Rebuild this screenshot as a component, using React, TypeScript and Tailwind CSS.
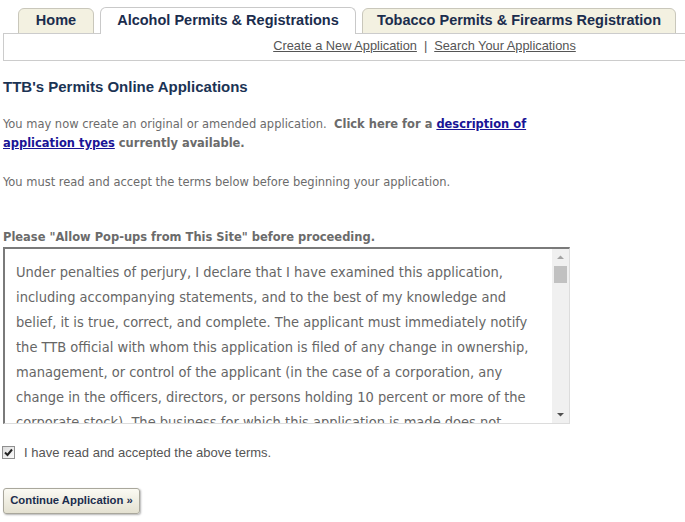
import React from "react";

const terms = [
    "Under penalties of perjury, I declare that I have examined this application,",
    "including accompanying statements, and to the best of my knowledge and",
    "belief, it is true, correct, and complete. The applicant must immediately notify",
    "the TTB official with whom this application is filed of any change in ownership,",
    "management, or control of the applicant (in the case of a corporation, any",
    "change in the officers, directors, or persons holding 10 percent or more of the",
    "corporate stock). The business for which this application is made does not",
];

const tahoma = "font-['DejaVu_Sans_Condensed','DejaVu_Sans',sans-serif] [font-stretch:condensed]";

export default function App() {
    return (
        <div className="w-[685px] h-[522px] bg-white overflow-hidden font-['Liberation_Sans',Arial,sans-serif]">
            {/* Tabs */}
            <div className="flex items-end h-[34px] pl-[18px] gap-[6px] text-[14.5px] font-bold text-[#1b2d4d]">
                <div className="h-[26px] w-[76px] flex items-center justify-center bg-[#f3f1e1] border border-[#c9c7bb] rounded-t-[6px]">Home</div>
                <div className="relative z-10 h-[27px] w-[256px] flex items-center justify-center bg-white border border-b-0 border-[#c9c9c9] rounded-t-[6px]">
                    Alcohol Permits &amp; Registrations
                </div>
                <div className="h-[26px] w-[314px] flex items-center justify-center bg-[#f3f1e1] border border-[#c9c7bb] rounded-t-[6px]">
                    Tobacco Permits &amp; Firearms Registration
                </div>
            </div>

            {/* Sub navigation */}
            <div className="relative -mt-px ml-[3px] h-[28px] bg-white border border-r-0 border-[#cccccc] flex items-center justify-center pl-[160px] pb-[3px] text-[12.8px] text-[#555]">
                <a className="underline">Create a New Application</a>
                <span className="mx-[7px]">|</span>
                <a className="underline">Search Your Applications</a>
            </div>

            <div className="pl-[3px]">
                <h1 className="mt-[17px] text-[15px] leading-[18px] font-bold text-[#1b3354]">TTB's Permits Online Applications</h1>

                <p className={`mt-[18px] w-[536px] text-[12.75px] leading-[19px] text-[#6b6b6b] ${tahoma}`}>
                    You may now create an original or amended application.&nbsp; <b>Click here for a </b>
                    <a className="font-bold text-[#1a1496] underline">description of application types</a>
                    <b> currently available.</b>
                </p>

                <p className={`mt-[20px] text-[12.75px] leading-[19px] text-[#6b6b6b] ${tahoma}`}>
                    You must read and accept the terms below before beginning your application.
                </p>

                <p className={`mt-[37px] text-[12.75px] leading-[18px] font-bold text-[#6b6b6b] ${tahoma}`}>
                    Please "Allow Pop-ups from This Site" before proceeding.
                </p>

                {/* Terms box */}
                <div className="mt-px w-[567px] h-[177px] flex border-t-2 border-l-2 border-t-[#7a7a7a] border-l-[#7a7a7a] border-r border-b border-r-[#dcdcdc] border-b-[#dcdcdc]">
                    <div className={`flex-1 overflow-hidden pt-[11px] pl-[11px] text-[14.5px] leading-[25px] text-[#666] ${tahoma}`}>
                        {terms.map((t, i) => (
                            <div key={i} className="whitespace-nowrap">{t}</div>
                        ))}
                    </div>
                    <div className="w-[17px] bg-[#f0f0f0] flex flex-col items-center">
                        <svg width="17" height="17" viewBox="0 0 17 17"><path d="M5 10 L8.5 6.5 L12 10 Z" fill="#a3a3a3" /></svg>
                        <div className="w-[13px] h-[17px] bg-[#c1c1c1]" />
                        <div className="flex-1" />
                        <svg width="17" height="17" viewBox="0 0 17 17"><path d="M5 7 L8.5 10.5 L12 7 Z" fill="#505050" /></svg>
                    </div>
                </div>

                {/* Accept */}
                <div className="mt-[19px] flex items-center -ml-[1px] text-[13px] text-[#555]">
                    <span className="w-[13px] h-[13px] border border-[#8f8f8f] bg-gradient-to-br from-[#dcdcdc] to-[#fbfbfb] flex items-center justify-center">
                        <svg width="9" height="9" viewBox="0 0 9 9"><path d="M1 4.5 L3.5 7 L8 1.5" stroke="#222" strokeWidth="2" fill="none" /></svg>
                    </span>
                    <span className="ml-[9px]">I have read and accepted the above terms.</span>
                </div>

                <button className="mt-[25px] w-[137px] h-[26px] rounded-[3px] border border-[#a9a79c] bg-gradient-to-b from-[#fbfaf3] to-[#e4e1d1] shadow-[1px_1px_2px_rgba(0,0,0,0.3)] text-[11.3px] font-bold text-[#1b2d4d]">
                    Continue Application »
                </button>
            </div>
        </div>
    );
}
